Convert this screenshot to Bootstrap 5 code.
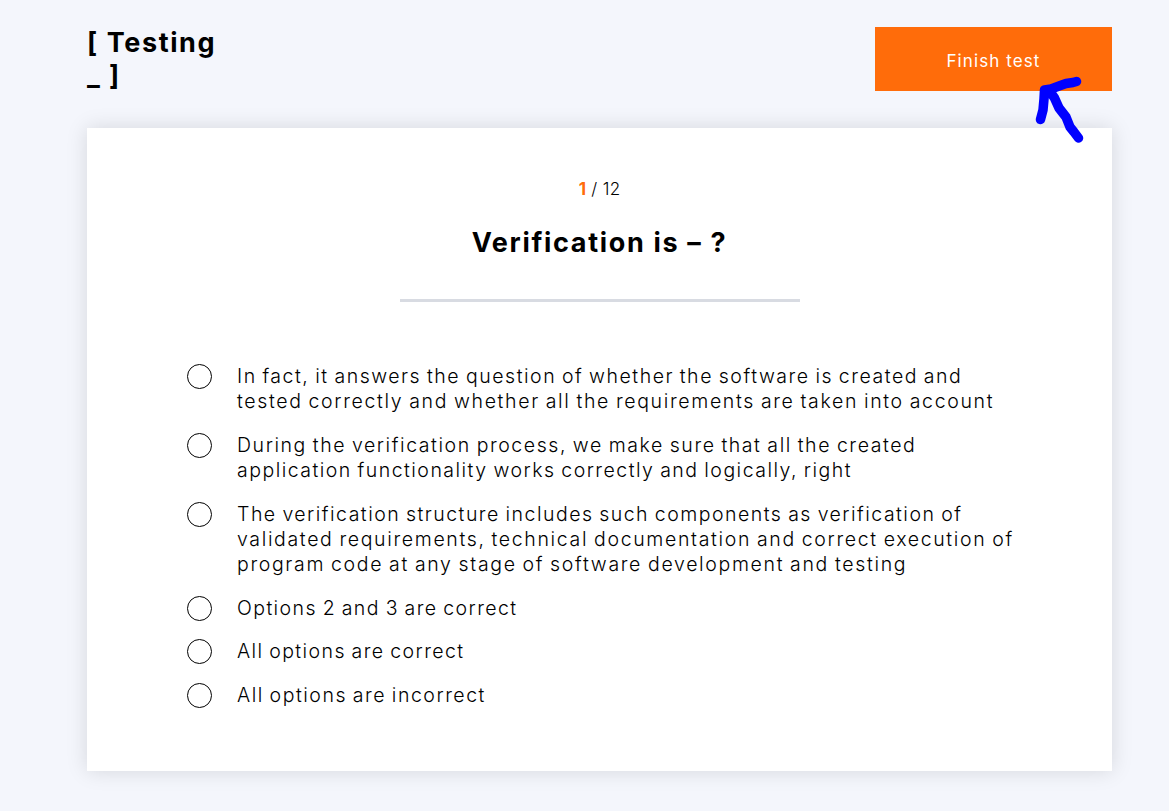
<!DOCTYPE html>
<html lang="en">
<head>
<meta charset="utf-8">
<meta name="viewport" content="width=device-width, initial-scale=1">
<title>Testing</title>
<link href="https://cdn.jsdelivr.net/npm/bootstrap@5.3.0/dist/css/bootstrap.min.css" rel="stylesheet">
<style>
body{background:#f4f6fc;color:#000;font-family:Inter,"Liberation Sans",sans-serif}
.page{width:1025px;margin-left:87px}
.topbar{padding-top:26px;height:128px}
.brand{font-size:27px;font-weight:700;line-height:33px;letter-spacing:1.6px}
.brand .tail{letter-spacing:1.4px}
.finish{width:237px;height:64px;margin-top:1px;background:#ff6c0a;color:#fff;border:0;border-radius:0;font-size:17px;line-height:24px;letter-spacing:1.1px;padding:3px 0 0}
.finish:hover{background:#ff6c0a;color:#fff}
.pointer{position:absolute;left:158px;top:46px}
.quiz{height:643px;border:0;border-radius:0;box-shadow:0 0 20px rgba(0,0,0,.13);padding:49px 100px 0}
.counter{font-size:17px;font-weight:300;line-height:25px;letter-spacing:.3px}
.counter b{color:#ff6c0a;font-weight:700}
.question{font-size:27px;font-weight:700;line-height:33px;letter-spacing:1.67px;margin:24px 0 40px}
.rule{width:400px;height:3px;background:#d8dbe2;margin-bottom:62.3px}
.answers{gap:18.75px}
.answer{font-size:19.5px;font-weight:300;line-height:25px;cursor:pointer;word-spacing:-1.2px}
.answer input{appearance:none;flex:none;width:25px;height:25px;margin:0 25px 0 0;border:1px solid #000;border-radius:50%;background:#fff}
.answer input:checked{background:#ff6c0a}
.answer span{display:block;white-space:nowrap}
.t1{letter-spacing:1.42px}.t2{letter-spacing:1.52px}.t3{letter-spacing:1.48px}.t4{letter-spacing:1.57px}.t5{letter-spacing:1.66px}.t6{letter-spacing:1.65px}
</style>
</head>
<body class="min-vh-100">
<div class="page pb-4">
  <header class="topbar d-flex justify-content-between align-items-start">
    <div class="brand">[ Testing<br><span class="tail">_ ]</span></div>
    <div class="position-relative">
      <button type="button" class="btn finish">Finish test</button>
      <svg class="pointer z-1" width="52" height="74" viewBox="1033 72 52 74" fill="none" stroke="#00f" stroke-width="9.5" stroke-linecap="round" stroke-linejoin="round"><path d="M1076.500 81.500L1073 82.500L1066 83.500L1059 86L1051 89L1044.500 90L1044 99L1043 110L1040.500 119.500M1049 90L1054.500 98L1059 108L1066 117L1070 127L1074 132L1078.500 138"/></svg>
    </div>
  </header>
  <main class="card quiz">
    <div class="counter text-center"><b>1</b> / 12</div>
    <h1 class="question text-center">Verification is – ?</h1>
    <div class="rule mx-auto"></div>
    <form class="answers d-flex flex-column">
      <label class="answer d-flex"><input type="radio" name="answer"><div><span class="t2">In fact, it answers the question of whether the software is created and</span><span class="t6">tested correctly and whether all the requirements are taken into account</span></div></label>
      <label class="answer d-flex"><input type="radio" name="answer"><div><span class="t4">During the verification process, we make sure that all the created</span><span class="t3">application functionality works correctly and logically, right</span></div></label>
      <label class="answer d-flex"><input type="radio" name="answer"><div><span class="t3">The verification structure includes such components as verification of</span><span class="t6">validated requirements, technical documentation and correct execution of</span><span class="t5">program code at any stage of software development and testing</span></div></label>
      <label class="answer d-flex"><input type="radio" name="answer"><div><span class="t1">Options 2 and 3 are correct</span></div></label>
      <label class="answer d-flex"><input type="radio" name="answer"><div><span class="t1">All options are correct</span></div></label>
      <label class="answer d-flex"><input type="radio" name="answer"><div><span class="t2">All options are incorrect</span></div></label>
    </form>
  </main>
</div>
<script src="https://cdn.jsdelivr.net/npm/bootstrap@5.3.0/dist/js/bootstrap.bundle.min.js"></script>
</body>
</html>
